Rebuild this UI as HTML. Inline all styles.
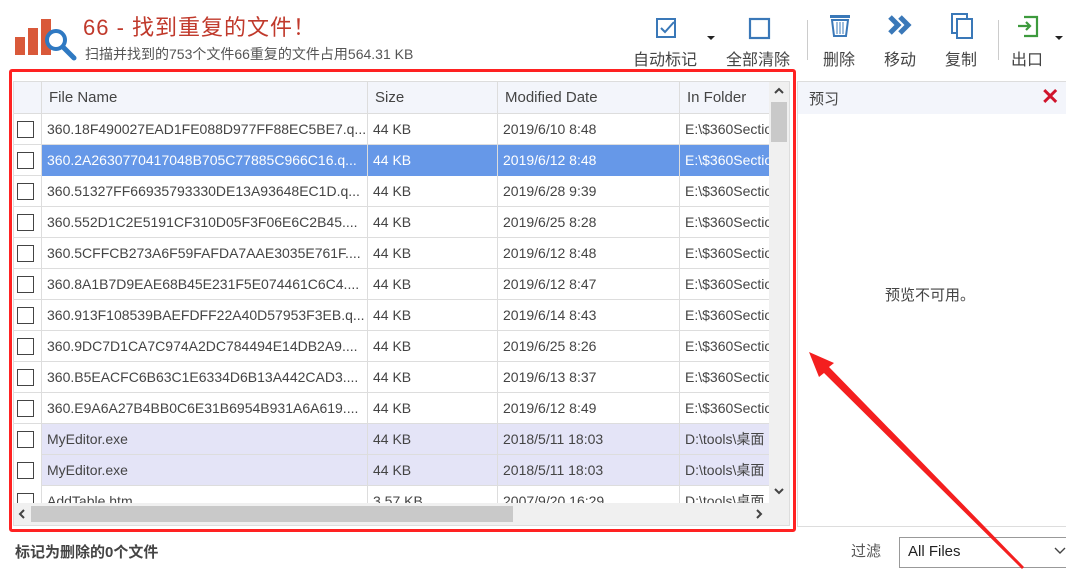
<!DOCTYPE html><html><head><meta charset="utf-8"><style>
*{margin:0;padding:0;box-sizing:border-box}
body{width:1066px;height:583px;background:#fff;position:relative;overflow:hidden;font-family:"Liberation Sans","Noto Sans CJK SC",sans-serif;color:#333}
.a{position:absolute}
.row{position:absolute;left:14px;width:755px;height:31px;border-bottom:1px solid #ddd;font-size:14px;color:#444}
.row div{position:absolute;top:0;height:31px;line-height:31px;white-space:nowrap;overflow:hidden;border-right:1px solid #ddd;padding-left:5px}
.cb{left:0;width:28px}
.cb span{position:absolute;left:3px;top:7px;width:17px;height:17px;border:1.5px solid #444;background:#fff}
.c1{left:28px;width:326px}.c2{left:354px;width:130px}.c3{left:484px;width:182px}.c4{left:666px;width:89px;border-right:none!important}
.tb{position:absolute;top:46px;font-size:16px;color:#444;text-align:center}
</style></head><body>
<div class="a" style="left:15px;top:37px;width:10px;height:18px;background:#d9593a"></div>
<div class="a" style="left:28px;top:28px;width:10px;height:27px;background:#d9593a"></div>
<div class="a" style="left:41px;top:19px;width:10px;height:36px;background:#d9593a"></div>
<svg class="a" style="left:42px;top:26px" width="36" height="36"><circle cx="14" cy="14" r="9" fill="#fff" stroke="#2f79c2" stroke-width="4"/><line x1="21" y1="21" x2="32" y2="32" stroke="#2f79c2" stroke-width="5" stroke-linecap="round"/></svg>
<div class="a" style="left:83px;top:10px;font-size:22px;color:#c0392b;letter-spacing:1px">66 - 找到重复的文件！</div>
<div class="a" style="left:85px;top:44px;font-size:14px;color:#555">扫描并找到的753个文件66重复的文件占用564.31 KB</div>
<svg class="a" style="left:655px;top:17px" width="24" height="24"><rect x="2" y="2" width="18" height="18" fill="none" stroke="#3a78b8" stroke-width="2"/><path d="M6 11l4 4 9-10" fill="none" stroke="#3a78b8" stroke-width="2"/></svg>
<div class="tb" style="left:633px">自动标记</div><div class="a" style="left:707px;top:36px;border:4px solid transparent;border-top:4px solid #222"></div>
<svg class="a" style="left:748px;top:17px" width="24" height="24"><rect x="2" y="2" width="19" height="19" fill="none" stroke="#3a78b8" stroke-width="2.2"/></svg>
<div class="tb" style="left:726px">全部清除</div>
<div class="a" style="left:807px;top:20px;width:1px;height:40px;background:#ccc"></div>
<svg class="a" style="left:828px;top:12px" width="24" height="26"><rect x="2" y="3" width="20" height="3" fill="#3a78b8"/><path d="M4 8h16l-2 16H6z" fill="none" stroke="#3a78b8" stroke-width="2"/><path d="M9 10v12M12 10v12M15 10v12" stroke="#3a78b8"/></svg>
<div class="tb" style="left:823px">删除</div>
<svg class="a" style="left:887px;top:14px" width="28" height="22"><path d="M3 3l8 8-8 8M13 3l8 8-8 8" fill="none" stroke="#3a78b8" stroke-width="5"/></svg>
<div class="tb" style="left:884px">移动</div>
<svg class="a" style="left:949px;top:12px" width="26" height="28"><rect x="3" y="2" width="15" height="19" fill="none" stroke="#3a78b8" stroke-width="2"/><rect x="8" y="7" width="15" height="19" fill="#fff" stroke="#3a78b8" stroke-width="2"/></svg>
<div class="tb" style="left:945px">复制</div>
<div class="a" style="left:998px;top:20px;width:1px;height:40px;background:#ccc"></div>
<svg class="a" style="left:1016px;top:15px" width="24" height="24"><path d="M8 2h13v19H8" fill="none" stroke="#3d9a3d" stroke-width="2.2"/><path d="M2 11h12M10 7l4 4-4 4" fill="none" stroke="#3d9a3d" stroke-width="2.2"/></svg>
<div class="tb" style="left:1011px">出口</div><div class="a" style="left:1055px;top:36px;border:4px solid transparent;border-top:4px solid #222"></div>
<div class="a" style="left:13px;top:81px;width:777px;height:445px;border:1px solid #ddd"></div>
<div class="a" style="left:14px;top:82px;width:755px;height:32px;background:#f3f5fb;border-bottom:1px solid #ddd;font-size:15px;color:#444">
<div class="a" style="left:27px;top:0;width:1px;height:32px;background:#ddd"></div>
<div class="a" style="left:35px;top:7px">File Name</div>
<div class="a" style="left:353px;top:0;width:1px;height:32px;background:#ddd"></div><div class="a" style="left:361px;top:7px">Size</div>
<div class="a" style="left:483px;top:0;width:1px;height:32px;background:#ddd"></div><div class="a" style="left:491px;top:7px">Modified Date</div>
<div class="a" style="left:665px;top:0;width:1px;height:32px;background:#ddd"></div><div class="a" style="left:673px;top:7px">In Folder</div>
</div>
<div class="a" style="left:14px;top:114px;width:755px;height:389px;overflow:hidden">
<div class="row" style="left:0;top:0"><div class="cb"><span></span></div><div class="c1">360.18F490027EAD1FE088D977FF88EC5BE7.q...</div><div class="c2">44 KB</div><div class="c3">2019/6/10 8:48</div><div class="c4">E:\$360Section</div></div>
<div class="row" style="left:0;top:31px"><div class="cb"><span></span></div><div class="c1" style="background:#6698e8;color:#fff">360.2A2630770417048B705C77885C966C16.q...</div><div class="c2" style="background:#6698e8;color:#fff">44 KB</div><div class="c3" style="background:#6698e8;color:#fff">2019/6/12 8:48</div><div class="c4" style="background:#6698e8;color:#fff">E:\$360Section</div></div>
<div class="row" style="left:0;top:62px"><div class="cb"><span></span></div><div class="c1">360.51327FF66935793330DE13A93648EC1D.q...</div><div class="c2">44 KB</div><div class="c3">2019/6/28 9:39</div><div class="c4">E:\$360Section</div></div>
<div class="row" style="left:0;top:93px"><div class="cb"><span></span></div><div class="c1">360.552D1C2E5191CF310D05F3F06E6C2B45....</div><div class="c2">44 KB</div><div class="c3">2019/6/25 8:28</div><div class="c4">E:\$360Section</div></div>
<div class="row" style="left:0;top:124px"><div class="cb"><span></span></div><div class="c1">360.5CFFCB273A6F59FAFDA7AAE3035E761F....</div><div class="c2">44 KB</div><div class="c3">2019/6/12 8:48</div><div class="c4">E:\$360Section</div></div>
<div class="row" style="left:0;top:155px"><div class="cb"><span></span></div><div class="c1">360.8A1B7D9EAE68B45E231F5E074461C6C4....</div><div class="c2">44 KB</div><div class="c3">2019/6/12 8:47</div><div class="c4">E:\$360Section</div></div>
<div class="row" style="left:0;top:186px"><div class="cb"><span></span></div><div class="c1">360.913F108539BAEFDFF22A40D57953F3EB.q...</div><div class="c2">44 KB</div><div class="c3">2019/6/14 8:43</div><div class="c4">E:\$360Section</div></div>
<div class="row" style="left:0;top:217px"><div class="cb"><span></span></div><div class="c1">360.9DC7D1CA7C974A2DC784494E14DB2A9....</div><div class="c2">44 KB</div><div class="c3">2019/6/25 8:26</div><div class="c4">E:\$360Section</div></div>
<div class="row" style="left:0;top:248px"><div class="cb"><span></span></div><div class="c1">360.B5EACFC6B63C1E6334D6B13A442CAD3....</div><div class="c2">44 KB</div><div class="c3">2019/6/13 8:37</div><div class="c4">E:\$360Section</div></div>
<div class="row" style="left:0;top:279px"><div class="cb"><span></span></div><div class="c1">360.E9A6A27B4BB0C6E31B6954B931A6A619....</div><div class="c2">44 KB</div><div class="c3">2019/6/12 8:49</div><div class="c4">E:\$360Section</div></div>
<div class="row" style="left:0;top:310px;background:#e4e4f7"><div class="cb" style="background:#fff"><span></span></div><div class="c1">MyEditor.exe</div><div class="c2">44 KB</div><div class="c3">2018/5/11 18:03</div><div class="c4">D:\tools\桌面</div></div>
<div class="row" style="left:0;top:341px;background:#e4e4f7"><div class="cb" style="background:#fff"><span></span></div><div class="c1">MyEditor.exe</div><div class="c2">44 KB</div><div class="c3">2018/5/11 18:03</div><div class="c4">D:\tools\桌面</div></div>
<div class="row" style="left:0;top:372px"><div class="cb"><span></span></div><div class="c1">AddTable.htm</div><div class="c2">3.57 KB</div><div class="c3">2007/9/20 16:29</div><div class="c4">D:\tools\桌面</div></div>
</div>
<div class="a" style="left:769px;top:82px;width:20px;height:421px;background:#f0f0f0"></div>
<div class="a" style="left:771px;top:102px;width:16px;height:40px;background:#c9c9c9"></div>
<svg class="a" style="left:773px;top:86px" width="12" height="10"><path d="M2 7l4-4 4 4" fill="none" stroke="#444" stroke-width="2"/></svg>
<svg class="a" style="left:773px;top:486px" width="12" height="10"><path d="M2 3l4 4 4-4" fill="none" stroke="#444" stroke-width="2"/></svg>
<div class="a" style="left:14px;top:503px;width:775px;height:22px;background:#f0f0f0"></div>
<div class="a" style="left:31px;top:506px;width:482px;height:16px;background:#c9c9c9"></div>
<svg class="a" style="left:17px;top:508px" width="10" height="12"><path d="M7 2l-4 4 4 4" fill="none" stroke="#444" stroke-width="2"/></svg>
<svg class="a" style="left:754px;top:508px" width="10" height="12"><path d="M3 2l4 4-4 4" fill="none" stroke="#444" stroke-width="2"/></svg>
<div class="a" style="left:9px;top:69px;width:787px;height:463px;border:3px solid #f22;border-radius:3px"></div>
<div class="a" style="left:797px;top:81px;width:269px;height:446px;border:1px solid #ddd;border-right:none"></div>
<div class="a" style="left:798px;top:82px;width:268px;height:32px;background:#f3f5fb"></div>
<div class="a" style="left:809px;top:88px;font-size:15px;color:#444">预习</div>
<div class="a" style="left:1041px;top:84px;font-size:22px;font-weight:bold;color:#d0142c">✕</div>
<div class="a" style="left:885px;top:284px;font-size:15px;color:#444">预览不可用。</div>
<div class="a" style="left:15px;top:541px;font-size:15px;font-weight:bold;color:#444">标记为删除的0个文件</div>
<div class="a" style="left:851px;top:540px;font-size:15px;color:#555">过滤</div>
<div class="a" style="left:899px;top:537px;width:175px;height:31px;border:1px solid #999;background:#fff"></div>
<div class="a" style="left:908px;top:543px;font-size:15px;color:#222">All Files</div>
<svg class="a" style="left:1054px;top:546px" width="12" height="10"><path d="M1 2l5 5 5-5" fill="none" stroke="#444" stroke-width="1.4"/></svg>
<svg class="a" style="left:0;top:0" width="1066" height="583"><path d="M809 352L834 363L829 367L1024 567L1022 569L824 373L819 377Z" fill="#f41f1f"/></svg>
</body></html>
